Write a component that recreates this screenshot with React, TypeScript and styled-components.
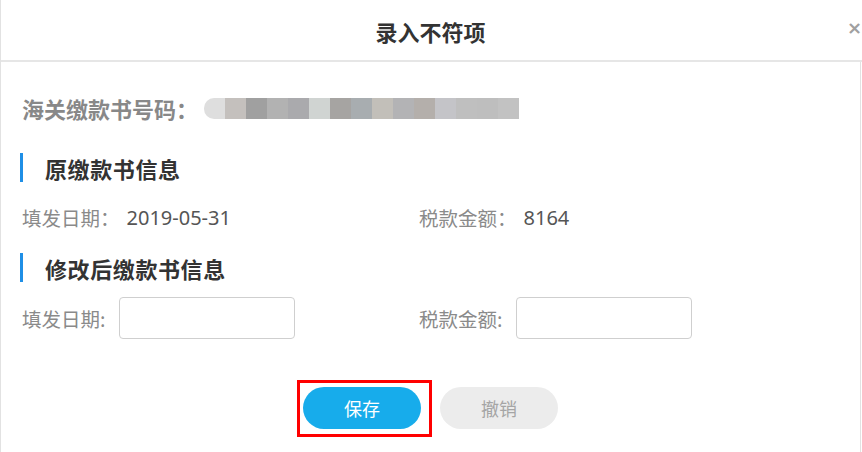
import React from 'react';
import styled, { createGlobalStyle } from 'styled-components';

const GlobalStyle = createGlobalStyle`
  html, body {
    margin: 0;
    padding: 0;
    background: #ffffff;
  }
  body {
    font-family: 'Noto Sans', 'Noto Sans CJK SC', sans-serif;
    color: #333;
  }
`;

const Dialog = styled.div`
  width: 862px;
  height: 452px;
  box-sizing: border-box;
  border-left: 1px solid #e2e2e2;
  overflow: hidden;
  display: flex;
  flex-direction: column;
`;

const Header = styled.div`
  height: 60px;
  flex: none;
  display: grid;
  grid-template-columns: 1fr auto 1fr;
  align-items: center;
  border-bottom: 2px solid #e6e6e6;
`;

const Title = styled.div`
  grid-column: 2;
  font-family: 'Noto Sans CJK SC', sans-serif;
  font-size: 22px;
  font-weight: 700;
  color: #333;
  padding-top: 1px;
  margin-left: -2px;
`;

const Close = styled.button`
  grid-column: 3;
  justify-self: end;
  margin-right: 0;
  margin-top: -6px;
  background: none;
  border: none;
  padding: 0;
  font-family: 'DejaVu Sans', sans-serif;
  font-size: 18px;
  font-weight: 700;
  color: #a0a0a0;
  cursor: pointer;
`;

const Body = styled.div`
  flex: 1;
  border-right: 1px solid #e2e2e2;
  margin-right: 1px;
  padding: 0 0 0 21px;
  display: flex;
  flex-direction: column;
`;

const CodeRow = styled.div`
  height: 90px;
  display: flex;
  align-items: center;
  padding-top: 1px;
`;

const CodeLabel = styled.span`
  font-family: 'Noto Sans CJK SC', sans-serif;
  font-size: 22px;
  font-weight: 700;
  color: #888;
  width: 182px;
  flex: none;
  white-space: nowrap;
`;

const Mosaic = styled.div`
  display: flex;
  height: 21px;
  overflow: hidden;
  border-radius: 10px 0 0 10px;
`;

const MosaicCell = styled.span<{ $color: string }>`
  width: 21px;
  height: 100%;
  background: ${(p) => p.$color};
`;

const SectionTitle = styled.div<{ $gap?: number }>`
  margin-top: ${(p) => p.$gap ?? 0}px;
  height: 29px;
  border-left: 3px solid #1f8fe6;
  padding-left: 22px;
  margin-left: -2px;
  display: flex;
  align-items: center;
  font-family: 'Noto Sans CJK SC', sans-serif;
  font-size: 22px;
  letter-spacing: 0.6px;
  font-weight: 700;
  color: #333;
`;

const FieldRow = styled.div<{ $height: number }>`
  height: ${(p) => p.$height}px;
  display: grid;
  grid-template-columns: 397px 1fr;
  align-items: center;
`;

const Field = styled.div`
  display: flex;
  align-items: center;
`;

const Label = styled.span`
  font-family: 'Noto Sans CJK SC', sans-serif;
  font-size: 19.5px;
  color: #8a8a8a;
`;

const Value = styled.span`
  font-family: 'Noto Sans', sans-serif;
  font-size: 20px;
  color: #555;
  margin-left: 7px;
`;

const Input = styled.input`
  width: 176px;
  height: 42px;
  box-sizing: border-box;
  margin-left: 14px;
  border: 1px solid #cfcfcf;
  border-radius: 4px;
  padding: 0 10px;
  font-size: 18px;
  outline: none;
`;

const Actions = styled.div`
  margin-top: 33px;
  margin-left: -21px;
  display: flex;
  justify-content: center;
  gap: 19px;
`;

const Marked = styled.div`
  position: relative;
`;

const Highlight = styled.div`
  position: absolute;
  top: -7px;
  left: -6px;
  right: -11px;
  bottom: -8px;
  border: 3px solid #ff0000;
  pointer-events: none;
`;

const PillButton = styled.button<{ $primary?: boolean }>`
  width: 118px;
  height: 42px;
  border: none;
  border-radius: 21px;
  font-family: 'Noto Sans CJK SC', sans-serif;
  font-size: 18px;
  background: ${(p) => (p.$primary ? '#17aceb' : '#ececec')};
  color: ${(p) => (p.$primary ? '#ffffff' : '#a5a5a5')};
  cursor: pointer;
`;

const mosaic = [
  '#dedede', '#c4c0bd', '#a0a0a0', '#b2b2b2', '#aaaaad', '#d0d4d2', '#a6a4a2',
  '#a8adb0', '#c2bfb9', '#b3b3b5', '#b4afab', '#c4c4c8', '#bfbfbf', '#bebebe', '#c2c2c2',
];

const App = () => {
  return (
    <>
      <GlobalStyle />
      <Dialog>
        <Header>
          <Title>录入不符项</Title>
          <Close>×</Close>
        </Header>
        <Body>
          <CodeRow>
            <CodeLabel>海关缴款书号码：</CodeLabel>
            <Mosaic>
              {mosaic.map((c, i) => (
                <MosaicCell key={i} $color={c} />
              ))}
            </Mosaic>
          </CodeRow>

          <SectionTitle>原缴款书信息</SectionTitle>
          <FieldRow $height={70}>
            <Field>
              <Label>填发日期：</Label>
              <Value>2019-05-31</Value>
            </Field>
            <Field>
              <Label>税款金额：</Label>
              <Value>8164</Value>
            </Field>
          </FieldRow>

          <SectionTitle $gap={1}>修改后缴款书信息</SectionTitle>
          <FieldRow $height={72}>
            <Field>
              <Label>填发日期:</Label>
              <Input />
            </Field>
            <Field>
              <Label>税款金额:</Label>
              <Input />
            </Field>
          </FieldRow>

          <Actions>
            <Marked>
              <PillButton $primary>保存</PillButton>
              <Highlight />
            </Marked>
            <PillButton>撤销</PillButton>
          </Actions>
        </Body>
      </Dialog>
    </>
  );
};

export default App;
